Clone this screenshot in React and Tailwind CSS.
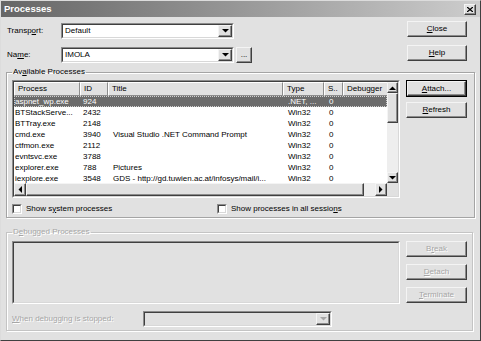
const processes = [
  { name: 'aspnet_wp.exe', id: '924', title: '', type: '.NET, ...', s: '0', selected: true },
  { name: 'BTStackServe...', id: '2432', title: '', type: 'Win32', s: '0' },
  { name: 'BTTray.exe', id: '2148', title: '', type: 'Win32', s: '0' },
  { name: 'cmd.exe', id: '3940', title: 'Visual Studio .NET Command Prompt', type: 'Win32', s: '0' },
  { name: 'ctfmon.exe', id: '2112', title: '', type: 'Win32', s: '0' },
  { name: 'evntsvc.exe', id: '3788', title: '', type: 'Win32', s: '0' },
  { name: 'explorer.exe', id: '788', title: 'Pictures', type: 'Win32', s: '0' },
  { name: 'iexplore.exe', id: '3548', title: 'GDS - http://gd.tuwien.ac.at/infosys/mail/i...', type: 'Win32', s: '0' },
  { name: 'msmsgs.exe', id: '2820', title: '', type: 'Win32', s: '0' },
]

const Tri = ({ dir, color = '#000' }) => {
  if (dir === 'down') return <svg width="7" height="4"><polygon points="0,0 7,0 3.5,3.5" fill={color} /></svg>
  if (dir === 'up') return <svg width="7" height="4"><polygon points="0,4 7,4 3.5,0.5" fill={color} /></svg>
  if (dir === 'left') return <svg width="4" height="7"><polygon points="4,0 4,7 0.5,3.5" fill={color} /></svg>
  return <svg width="4" height="7"><polygon points="0,0 0,7 3.5,3.5" fill={color} /></svg>
}

const Raised = ({ className = '', children }) => (
  <div className={`border border-t-[#f4f4f4] border-l-[#f4f4f4] border-r-[#404040] border-b-[#404040] shadow-[inset_-1px_-1px_0_#8c8c8c] bg-[#e1e1e1] flex items-center justify-center ${className}`}>
    {children}
  </div>
)

const Btn = ({ children, def, disabled, className = '' }) => {
  const label = (
    <span className={disabled ? 'text-[#a6a6a6] [text-shadow:1px_1px_0_#fff]' : 'text-black'}>{children}</span>
  )
  if (def) {
    return (
      <div className={`border border-black ${className}`}>
        <Raised className="h-full w-full">{label}</Raised>
      </div>
    )
  }
  return <Raised className={className}>{label}</Raised>
}

const Combo = ({ value, disabled, className = '' }) => (
  <div className={`h-[16px] border border-t-[#8c8c8c] border-l-[#8c8c8c] border-r-white border-b-white ${className}`}>
    <div className={`h-full flex border border-t-[#404040] border-l-[#404040] border-r-[#d8d8d8] border-b-[#d8d8d8] ${disabled ? 'bg-[#e1e1e1]' : 'bg-white'}`}>
      <div className="flex-1 pl-[2px] leading-[12px] text-black">{value}</div>
      <Raised className="w-[14px] h-full">
        <Tri dir="down" color={disabled ? '#a6a6a6' : '#000'} />
      </Raised>
    </div>
  </div>
)

const Check = ({ children, className = '' }) => (
  <div className={`flex items-center gap-[4px] ${className}`}>
    <div className="w-[10px] h-[10px] border border-t-[#8c8c8c] border-l-[#8c8c8c] border-r-white border-b-white">
      <div className="h-full border border-t-[#404040] border-l-[#404040] border-r-[#d8d8d8] border-b-[#d8d8d8] bg-white" />
    </div>
    <span>{children}</span>
  </div>
)

const Sunken = ({ className = '', children }) => (
  <div className={`border border-t-[#8c8c8c] border-l-[#8c8c8c] border-r-white border-b-white ${className}`}>
    <div className="h-full border border-t-[#404040] border-l-[#404040] border-r-[#d8d8d8] border-b-[#d8d8d8] flex flex-col overflow-hidden">
      {children}
    </div>
  </div>
)

const cols = [
  { key: 'name', label: 'Process', w: 'w-[66px]', row: 'pl-[1px]' },
  { key: 'id', label: 'ID', w: 'w-[28px]', row: 'pl-[3px]' },
  { key: 'title', label: 'Title', w: 'w-[175px]', row: 'pl-[5px]' },
  { key: 'type', label: 'Type', w: 'w-[41px]', row: 'pl-[5px]' },
  { key: 's', label: 'S..', w: 'w-[19px]', row: 'pl-[5px]' },
  { key: 'dbg', label: 'Debugger', w: 'w-[46px]', row: 'pl-[4px]' },
]

export default function App() {
  return (
    <div className="w-[481px] h-[341px] bg-[#e1e1e1] border border-t-[#dcdcdc] border-l-[#dcdcdc] border-r-[#404040] border-b-[#404040] font-['Liberation_Sans',Arial,sans-serif] text-[8px] leading-[10px] text-black overflow-hidden">
      {/* title bar */}
      <div className="h-[16px] bg-gradient-to-r from-[#666666] to-[#cdcdcd] flex items-center justify-between pl-[3px] pr-[4px]">
        <span className="text-white font-bold text-[9.5px]">Processes</span>
        <Raised className="w-[12px] h-[11px]">
          <svg width="6" height="5" viewBox="0 0 6 5">
            <path d="M0 0 L6 5 M6 0 L0 5" stroke="#000" strokeWidth="1.3" />
          </svg>
        </Raised>
      </div>

      {/* top section */}
      <div className="h-[50px] flex justify-between pl-[6px] pr-[13px]">
        <div className="flex flex-col gap-[8px] pt-[6px]">
          <div className="flex items-center">
            <span className="w-[54px]">Transp<u>o</u>rt:</span>
            <Combo value="Default" className="w-[173px]" />
          </div>
          <div className="flex items-center">
            <span className="w-[54px]">Na<u>m</u>e:</span>
            <Combo value="IMOLA" className="w-[173px]" />
            <Btn className="w-[16px] h-[16px] ml-[2px]">...</Btn>
          </div>
        </div>
        <div className="flex flex-col gap-[8px] pt-[4px]">
          <Btn className="w-[60px] h-[16px]"><u>C</u>lose</Btn>
          <Btn className="w-[60px] h-[16px]"><u>H</u>elp</Btn>
        </div>
      </div>

      {/* available processes */}
      <fieldset className="ml-[5px] w-[469px] border border-[#a4a4a4] shadow-[1px_1px_0_#fff,inset_1px_1px_0_#fff] px-[5px] pt-[3px] pb-[3px]">
        <legend className="px-[1px] leading-[10px]">Av<u>a</u>ilable Processes</legend>
        <div className="flex gap-[6px]">
          <Sunken className="w-[388px] h-[118px] bg-white">
            <div className="flex flex-1 min-h-0">
              <div className="flex-1 flex flex-col min-w-0 overflow-hidden">
                <div className="flex h-[14px] shrink-0">
                  {cols.map(c => (
                    <div key={c.key} className={`${c.w} shrink-0 h-full bg-[#e1e1e1] border border-t-white border-l-white border-r-[#8c8c8c] border-b-[#8c8c8c] pl-[3px] leading-[12px] whitespace-nowrap overflow-hidden`}>
                      {c.label}
                    </div>
                  ))}
                </div>
                <div className="flex-1 bg-white overflow-hidden">
                  {processes.map(p => (
                    <div key={p.name} className={`flex h-[11px] items-center ${p.selected ? 'bg-[#6b6b6b] text-white outline-1 outline-dotted outline-offset-[-1px] outline-[#cfcfcf]' : ''}`}>
                      {cols.map(c => (
                        <div key={c.key} className={`${c.w} shrink-0 ${c.row} whitespace-nowrap overflow-hidden`}>
                          {p[c.key] || ''}
                        </div>
                      ))}
                    </div>
                  ))}
                </div>
              </div>
              <div className="w-[11px] flex flex-col bg-[#eeeeee]">
                <Raised className="h-[11px] shrink-0"><Tri dir="up" /></Raised>
                <Raised className="h-[30px] shrink-0" />
                <div className="flex-1" />
                <Raised className="h-[11px] shrink-0"><Tri dir="down" /></Raised>
              </div>
            </div>
            <div className="flex h-[13px] shrink-0">
              <div className="flex-1 flex bg-[#eeeeee]">
                <Raised className="w-[12px] shrink-0"><Tri dir="left" /></Raised>
                <Raised className="w-[338px] shrink-0" />
                <div className="flex-1" />
                <Raised className="w-[12px] shrink-0"><Tri dir="right" /></Raised>
              </div>
              <div className="w-[11px] bg-[#e1e1e1]" />
            </div>
          </Sunken>
          <div className="flex flex-col gap-[5px]">
            <Btn def className="w-[61px] h-[17px]"><u>A</u>ttach...</Btn>
            <Btn className="w-[61px] h-[16px]"><u>R</u>efresh</Btn>
          </div>
        </div>
        <div className="flex h-[11px] mt-[5px]">
          <Check className="w-[205px]">Show s<u>y</u>stem processes</Check>
          <Check>Show processes in all sessio<u>n</u>s</Check>
        </div>
      </fieldset>

      {/* debugged processes */}
      <fieldset className="ml-[5px] mt-[9px] w-[467px] border border-[#c4c4c4] shadow-[1px_1px_0_#fff,inset_1px_1px_0_#fff] px-[5px] pt-[4px] pb-[3px] text-[#a6a6a6]">
        <legend className="px-[1px] leading-[10px] [text-shadow:1px_1px_0_#fff]">D<u>e</u>bugged Processes</legend>
        <div className="flex gap-[6px]">
          <Sunken className="w-[388px] h-[63px] bg-[#e1e1e1]" />
          <div className="flex flex-col gap-[7px]">
            <Btn disabled className="w-[61px] h-[16px]">B<u>r</u>eak</Btn>
            <Btn disabled className="w-[61px] h-[16px]"><u>D</u>etach</Btn>
            <Btn disabled className="w-[61px] h-[16px]"><u>T</u>erminate</Btn>
          </div>
        </div>
        <div className="flex items-center mt-[7px]">
          <span className="w-[131px] [text-shadow:1px_1px_0_#fff]"><u>W</u>hen debugging is stopped:</span>
          <Combo disabled value="" className="w-[189px]" />
        </div>
      </fieldset>
    </div>
  )
}
